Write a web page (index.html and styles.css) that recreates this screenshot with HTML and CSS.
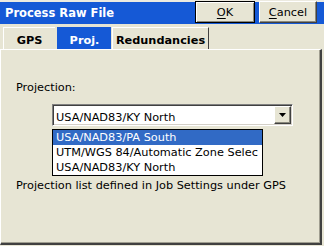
FILE: index.html
```html
<!DOCTYPE html>
<html lang="en">
  <head>
    <title>Process Raw File</title>
    <meta charset="utf-8">
    <link rel="stylesheet" href="styles.css">
  </head>
  <body>

  <div class="dialog">
    <div class="titlebar">
      <span class="title">Process Raw File</span>
      <div class="actions">
        <button class="btn default"><u>O</u>K</button>
        <button class="btn cancel"><u>C</u>ancel</button>
      </div>
    </div>

    <div class="tabs">
      <div class="tab gps">GPS</div>
      <div class="tab active">Proj.</div>
      <div class="tab last">Redundancies</div>
    </div>

    <div class="panel">
      <div class="label">Projection:</div>

      <div class="combo-field">
        <div class="combo">
          <span class="value">USA/NAD83/KY North</span>
          <span class="drop">
            <svg width="7" height="4" viewBox="0 0 7 4"><path d="M0 0h7L3.5 4z" fill="#000"/></svg>
          </span>
        </div>
        <ul class="list">
          <li class="selected">USA/NAD83/PA South</li>
          <li>UTM/WGS 84/Automatic Zone Selec</li>
          <li>USA/NAD83/KY North</li>
        </ul>
      </div>

      <div class="label note">Projection list defined in Job Settings under GPS</div>
    </div>
  </div>

  </body>
</html>
```

FILE: styles.css
```css
html {
  height: 100%;
}
body {
  margin: 0;
  width: 324px;
  height: 246px;
  overflow: hidden;
  background: #e7e5d4;
  color: #000;
  font-family: "DejaVu Sans", sans-serif;
  font-size: 11.3px;
}

.dialog {
  height: 246px;
  display: flex;
  flex-direction: column;
}

/* title bar with the two buttons */
.titlebar {
  height: 24px;
  box-sizing: border-box;
  padding-top: 3px;
  display: flex;
  background: linear-gradient(#eceae0 0 2px, #1559d6 2px);
}
.title {
  flex: 1;
  padding-left: 5px;
  color: #fff;
  font-weight: bold;
  font-size: 11.5px;
  line-height: 21px;
}
.actions {
  display: flex;
  gap: 4px;
  margin-top: -2px;
  padding-right: 7px;
}
.btn {
  box-sizing: border-box;
  height: 22px;
  padding: 0;
  background: #e7e5d4;
  color: #000;
  font-family: "DejaVu Sans", sans-serif;
  font-size: 11.3px;
  border: 1px solid;
  border-color: #fff #404040 #404040 #fff;
  box-shadow: inset -1px -1px 0 #8a887c;
}
.btn u {
  text-decoration-thickness: 1px;
  text-underline-offset: 2px;
}
.btn.default {
  width: 60px;
  border-color: #000;
  box-shadow: inset 1px 1px 0 #fff, inset -1px -1px 0 #8a887c;
}
.btn.cancel {
  width: 58px;
}

/* tab strip */
.tabs {
  height: 25px;
  box-sizing: border-box;
  padding: 3px 0 0 3px;
  display: flex;
}
.tab {
  height: 22px;
  box-sizing: border-box;
  padding-top: 3px;
  display: flex;
  align-items: center;
  justify-content: center;
  font-weight: bold;
  border-top: 1px solid #fff;
  border-left: 1px solid #fff;
}
.tab.gps {
  width: 52px;
  margin-right: 2px;
}
.tab.active {
  width: 54px;
  margin-right: 1px;
  color: #fff;
  background: #1559d6;
  border-color: #1559d6;
}
.tab.last {
  width: 97px;
  border-right: 1px solid #404040;
}

/* page body */
.panel {
  flex: 1;
  margin: 0 2px 1px 0;
  padding: 31px 0 0 15px;
  border-top: 1px solid #fff;
  border-left: 1px solid #fff;
  border-right: 2px solid #404040;
  border-bottom: 2px solid #404040;
  box-shadow: inset -1px -1px 0 #a09e90;
}
.label {
  line-height: 14px;
}
.note {
  margin-top: 53px;
}

.combo-field {
  position: relative;
  margin: 9px 0 0 36px;
  width: 241px;
}
.combo {
  height: 22px;
  box-sizing: border-box;
  display: flex;
  background: #fff;
  border: 1px solid;
  border-color: #808080 #fff #fff #808080;
  box-shadow: inset 1px 1px 0 #404040, inset -1px -1px 0 #d4d0c8;
}
.value {
  align-self: flex-end;
  padding-left: 3px;
  line-height: 14px;
  white-space: nowrap;
}
.drop {
  width: 17px;
  height: 18px;
  box-sizing: border-box;
  margin: 1px 1px 1px auto;
  display: flex;
  align-items: center;
  justify-content: center;
  background: #e7e5d4;
  border: 1px solid;
  border-color: #fff #404040 #404040 #fff;
  box-shadow: inset -1px -1px 0 #8a887c;
}

/* the open drop-down list */
.list {
  position: absolute;
  top: 25px;
  left: 0;
  width: 211px;
  box-sizing: border-box;
  margin: 0;
  padding: 0;
  list-style: none;
  background: #fff;
  border: 1px solid #000;
}
.list li {
  height: 15px;
  line-height: 15px;
  padding-left: 3px;
  white-space: nowrap;
}
.list li.selected {
  background: #316ac5;
  color: #fff;
}
```
